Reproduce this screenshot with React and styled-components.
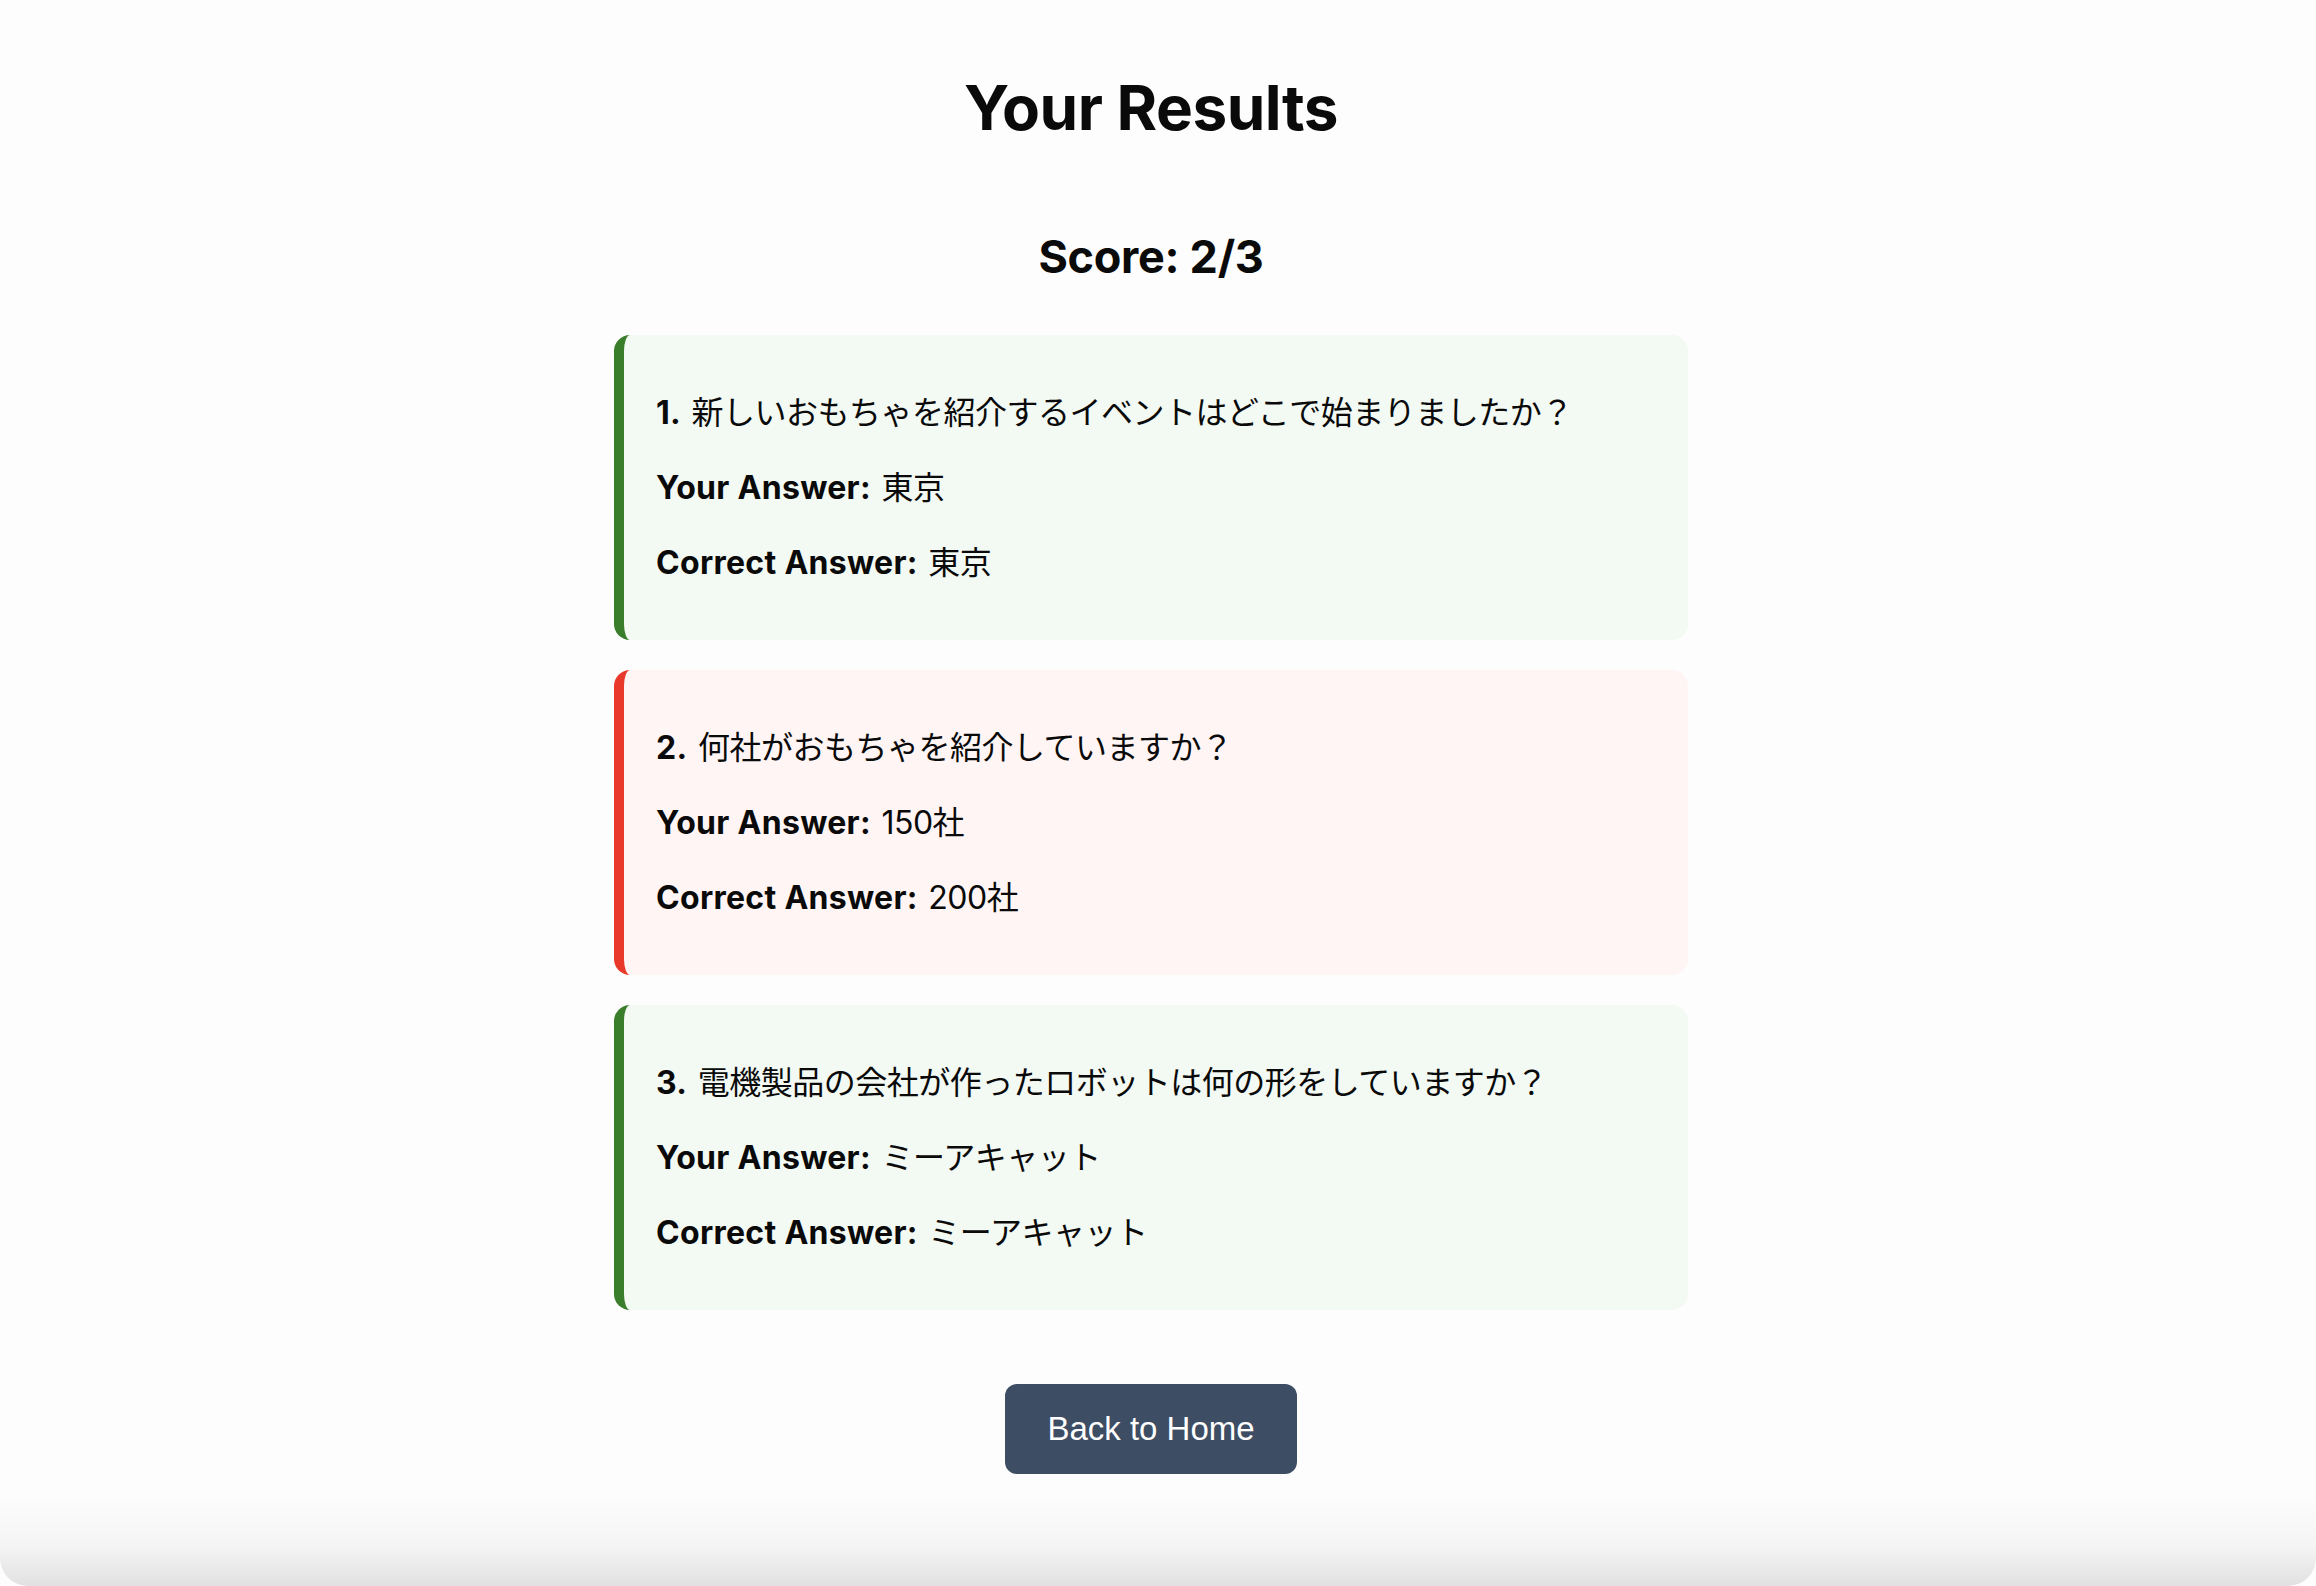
import React from 'react'
import styled, { createGlobalStyle, css } from 'styled-components'

const colors = {
  page: '#fdfdfd',
  text: '#0a0a0a',
  correct: '#3a7d2a',
  correctBg: '#f3f9f3',
  wrong: '#e8392a',
  wrongBg: '#fff5f5',
  button: '#3d4d63',
}

const GlobalStyle = createGlobalStyle`
  html, body {
    margin: 0;
    background: ${colors.page};
  }
  body {
    font-family: Inter, "Noto Sans CJK JP", sans-serif;
    color: ${colors.text};
  }
`

const Page = styled.div`
  min-height: 1586px;
  box-sizing: border-box;
  padding: 69px 14px 0 0;
  display: flex;
  flex-direction: column;
  align-items: center;
`

const Title = styled.h1`
  margin: 0;
  font-size: 62px;
  line-height: 78px;
  font-weight: 700;
  letter-spacing: -0.5px;
`

const Score = styled.h2`
  margin: 82px 0 0;
  font-size: 45px;
  line-height: 56px;
  font-weight: 700;
  letter-spacing: -0.3px;
`

const ResultList = styled.div`
  margin-top: 50px;
  width: 1074px;
  display: flex;
  flex-direction: column;
  gap: 30px;
`

const ResultCard = styled.div`
  box-sizing: border-box;
  padding: 24px 32px;
  border-radius: 16px;
  border-left: 10px solid ${colors.correct};
  background: ${colors.correctBg};

  ${props => !props.correct && css`
    border-left-color: ${colors.wrong};
    background: ${colors.wrongBg};
  `}
`

const Line = styled.p`
  margin: 32px 0;
  font-size: 32px;
  line-height: 43px;
  white-space: nowrap;
  letter-spacing: -0.5px;

  strong {
    font-weight: 700;
    letter-spacing: 0.3px;
    margin-right: 2px;
  }
`

const HomeButton = styled.button`
  margin-top: 74px;
  padding: 24px 42px;
  border: none;
  border-radius: 12px;
  background: ${colors.button};
  color: #fff;
  font-family: "Liberation Sans", Arial, sans-serif;
  font-size: 33px;
  line-height: 42px;
  cursor: pointer;
`

const BottomShade = styled.div`
  position: fixed;
  left: 0;
  right: 0;
  bottom: 0;
  height: 92px;
  border-radius: 0 0 28px 28px;
  background: linear-gradient(to bottom, rgba(0, 0, 0, 0), rgba(0, 0, 0, 0.03) 55%, rgba(0, 0, 0, 0.11));
  pointer-events: none;
`

const results = [
  {
    question: '新しいおもちゃを紹介するイベントはどこで始まりましたか？',
    yours: '東京',
    answer: '東京',
  },
  {
    question: '何社がおもちゃを紹介していますか？',
    yours: '150社',
    answer: '200社',
  },
  {
    question: '電機製品の会社が作ったロボットは何の形をしていますか？',
    yours: 'ミーアキャット',
    answer: 'ミーアキャット',
  },
]

function App() {
  const score = results.filter(r => r.yours === r.answer).length

  return (
    <>
      <GlobalStyle />
      <Page>
        <Title>Your Results</Title>
        <Score>Score: {score}/{results.length}</Score>
        <ResultList>
          {results.map((r, i) => (
            <ResultCard key={i} correct={r.yours === r.answer}>
              <Line><strong>{i + 1}.</strong> {r.question}</Line>
              <Line><strong>Your Answer:</strong> {r.yours}</Line>
              <Line><strong>Correct Answer:</strong> {r.answer}</Line>
            </ResultCard>
          ))}
        </ResultList>
        <HomeButton>Back to Home</HomeButton>
      </Page>
      <BottomShade />
    </>
  )
}

export default App
